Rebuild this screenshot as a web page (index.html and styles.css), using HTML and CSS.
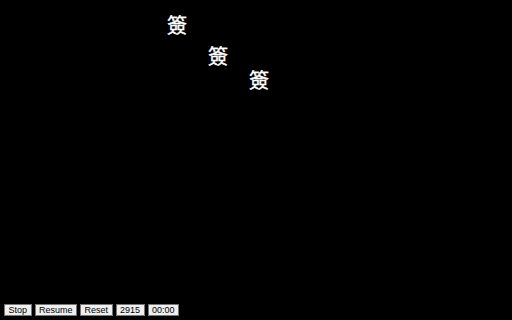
FILE: index.html
```html
<!DOCTYPE html>
<html>
<head>
<meta charset="utf-8">
<link rel="stylesheet" href="styles.css">
</head>
<body>
<div class="stage">
  <span class="glyph g1">簽</span>
  <span class="glyph g2">簽</span>
  <span class="glyph g3">簽</span>
</div>
<div class="toolbar">
  <button class="btn">Stop</button>
  <button class="btn">Resume</button>
  <button class="btn">Reset</button>
  <button class="btn">2915</button>
  <button class="btn">00:00</button>
</div>
</body>
</html>
```
FILE: styles.css
```css
html, body {
  margin: 0;
  padding: 0;
  background: #000;
  height: 100%;
}
body {
  display: flex;
  flex-direction: column;
  width: 512px;
  height: 320px;
  overflow: hidden;
}
.stage {
  position: relative;
  flex: 1;
}
.glyph {
  position: absolute;
  color: #fff;
  font-family: "Noto Sans CJK TC", "Noto Sans CJK SC", sans-serif;
  font-size: 20px;
  line-height: 20px;
  -webkit-text-stroke: 0.4px #fff;
}
.g1 { left: 167px; top: 15px; }
.g2 { left: 208px; top: 46px; }
.g3 { left: 249px; top: 70px; }
.toolbar {
  display: flex;
  gap: 3px;
  padding: 0 0 4px 4px;
}
.btn {
  margin: 0;
  font-family: "Liberation Sans", Arial, sans-serif;
  font-size: 9px;
  line-height: 10px;
  padding: 0 3.5px;
  background: #efefef;
  border: 1px solid #767676;
  border-radius: 0;
  color: #000;
}
```
